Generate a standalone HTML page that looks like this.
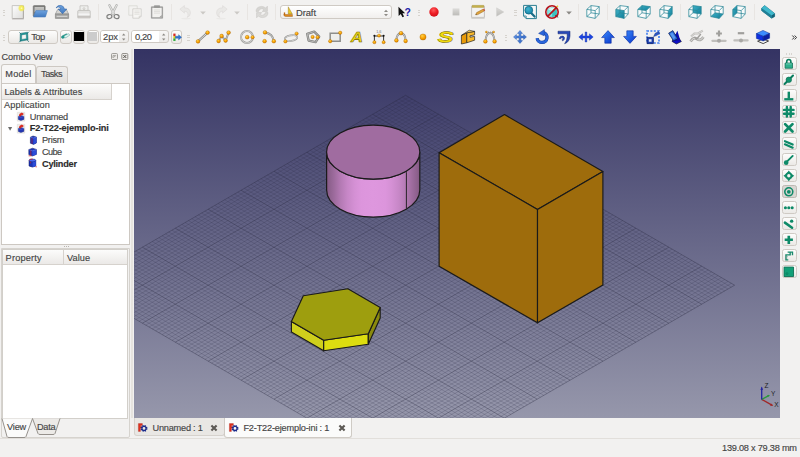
<!DOCTYPE html>
<html><head><meta charset="utf-8"><title>FreeCAD</title>
<style>
html,body{margin:0;padding:0}
body{width:800px;height:457px;overflow:hidden;background:#f2f1f0;position:relative;font-family:"Liberation Sans",sans-serif;font-size:10.5px;color:#3c3c3c}
.a{position:absolute}
.t{position:absolute;white-space:nowrap;line-height:12px;height:12px;-webkit-text-stroke:.15px currentColor}
.b{font-weight:bold}
.btn{position:absolute;border:1px solid #cfcac4;border-radius:3px;background:linear-gradient(#fdfdfc,#ebe9e6);box-sizing:border-box}
.sep{position:absolute;width:1px;background:#dcd9d5;height:16px;top:5px}
.hd{position:absolute;width:1px;height:1px;background:#b9b5af}
svg{position:absolute;overflow:visible}
.ic{position:absolute;width:16px;height:16px}
#vp{position:absolute;left:134px;top:49px;width:646px;height:369px;background:linear-gradient(#343363,#9697ab);overflow:hidden}
.panel{position:absolute;background:#fff;border:1px solid #cdc8c2;box-sizing:border-box}
.hdr{position:absolute;background:linear-gradient(#fcfcfb,#ebe9e7);border-bottom:1px solid #d6d2cd;border-right:1px solid #d6d2cd;box-sizing:border-box}
</style></head><body>

<!-- ======= 3D viewport ======= -->
<div id="vp"><svg width="646" height="369" viewBox="0 0 646 369" style="left:0;top:0;overflow:hidden"><path d="M268.31 48.20L597.31 238.10M274.89 48.20L-54.11 238.10M265.02 50.10L594.02 240.00M278.18 50.10L-50.82 240.00M261.73 52.00L590.73 241.90M281.47 52.00L-47.53 241.90M258.44 53.90L587.44 243.80M284.76 53.90L-44.24 243.80M255.15 55.80L584.15 245.69M288.05 55.80L-40.95 245.69M251.86 57.69L580.86 247.59M291.34 57.69L-37.66 247.59M248.57 59.59L577.57 249.49M294.63 59.59L-34.37 249.49M245.28 61.49L574.28 251.39M297.92 61.49L-31.08 251.39M241.99 63.39L570.99 253.29M301.21 63.39L-27.79 253.29M235.41 67.19L564.41 257.09M307.79 67.19L-21.21 257.09M232.12 69.09L561.12 258.99M311.08 69.09L-17.92 258.99M228.83 70.99L557.83 260.89M314.37 70.99L-14.63 260.89M225.54 72.89L554.54 262.79M317.66 72.89L-11.34 262.79M222.25 74.78L551.25 264.68M320.95 74.78L-8.05 264.68M218.96 76.68L547.96 266.58M324.24 76.68L-4.76 266.58M215.67 78.58L544.67 268.48M327.53 78.58L-1.47 268.48M212.38 80.48L541.38 270.38M330.82 80.48L1.82 270.38M209.09 82.38L538.09 272.28M334.11 82.38L5.11 272.28M202.51 86.18L531.51 276.08M340.69 86.18L11.69 276.08M199.22 88.08L528.22 277.98M343.98 88.08L14.98 277.98M195.93 89.98L524.93 279.88M347.27 89.98L18.27 279.88M192.64 91.88L521.64 281.78M350.56 91.88L21.56 281.78M189.35 93.77L518.35 283.67M353.85 93.77L24.85 283.67M186.06 95.67L515.06 285.57M357.14 95.67L28.14 285.57M182.77 97.57L511.77 287.47M360.43 97.57L31.43 287.47M179.48 99.47L508.48 289.37M363.72 99.47L34.72 289.37M176.19 101.37L505.19 291.27M367.01 101.37L38.01 291.27M169.61 105.17L498.61 295.07M373.59 105.17L44.59 295.07M166.32 107.07L495.32 296.97M376.88 107.07L47.88 296.97M163.03 108.97L492.03 298.87M380.17 108.97L51.17 298.87M159.74 110.87L488.74 300.77M383.46 110.87L54.46 300.77M156.45 112.76L485.45 302.66M386.75 112.76L57.75 302.66M153.16 114.66L482.16 304.56M390.04 114.66L61.04 304.56M149.87 116.56L478.87 306.46M393.33 116.56L64.33 306.46M146.58 118.46L475.58 308.36M396.62 118.46L67.62 308.36M143.29 120.36L472.29 310.26M399.91 120.36L70.91 310.26M136.71 124.16L465.71 314.06M406.49 124.16L77.49 314.06M133.42 126.06L462.42 315.96M409.78 126.06L80.78 315.96M130.13 127.96L459.13 317.86M413.07 127.96L84.07 317.86M126.84 129.86L455.84 319.76M416.36 129.86L87.36 319.76M123.55 131.75L452.55 321.65M419.65 131.75L90.65 321.65M120.26 133.65L449.26 323.55M422.94 133.65L93.94 323.55M116.97 135.55L445.97 325.45M426.23 135.55L97.23 325.45M113.68 137.45L442.68 327.35M429.52 137.45L100.52 327.35M110.39 139.35L439.39 329.25M432.81 139.35L103.81 329.25M103.81 143.15L432.81 333.05M439.39 143.15L110.39 333.05M100.52 145.05L429.52 334.95M442.68 145.05L113.68 334.95M97.23 146.95L426.23 336.85M445.97 146.95L116.97 336.85M93.94 148.85L422.94 338.75M449.26 148.85L120.26 338.75M90.65 150.75L419.65 340.64M452.55 150.75L123.55 340.64M87.36 152.64L416.36 342.54M455.84 152.64L126.84 342.54M84.07 154.54L413.07 344.44M459.13 154.54L130.13 344.44M80.78 156.44L409.78 346.34M462.42 156.44L133.42 346.34M77.49 158.34L406.49 348.24M465.71 158.34L136.71 348.24M70.91 162.14L399.91 352.04M472.29 162.14L143.29 352.04M67.62 164.04L396.62 353.94M475.58 164.04L146.58 353.94M64.33 165.94L393.33 355.84M478.87 165.94L149.87 355.84M61.04 167.84L390.04 357.74M482.16 167.84L153.16 357.74M57.75 169.73L386.75 359.63M485.45 169.73L156.45 359.63M54.46 171.63L383.46 361.53M488.74 171.63L159.74 361.53M51.17 173.53L380.17 363.43M492.03 173.53L163.03 363.43M47.88 175.43L376.88 365.33M495.32 175.43L166.32 365.33M44.59 177.33L373.59 367.23M498.61 177.33L169.61 367.23M38.01 181.13L367.01 371.03M505.19 181.13L176.19 371.03M34.72 183.03L363.72 372.93M508.48 183.03L179.48 372.93M31.43 184.93L360.43 374.83M511.77 184.93L182.77 374.83M28.14 186.83L357.14 376.73M515.06 186.83L186.06 376.73M24.85 188.72L353.85 378.62M518.35 188.72L189.35 378.62M21.56 190.62L350.56 380.52M521.64 190.62L192.64 380.52M18.27 192.52L347.27 382.42M524.93 192.52L195.93 382.42M14.98 194.42L343.98 384.32M528.22 194.42L199.22 384.32M11.69 196.32L340.69 386.22M531.51 196.32L202.51 386.22M5.11 200.12L334.11 390.02M538.09 200.12L209.09 390.02M1.82 202.02L330.82 391.92M541.38 202.02L212.38 391.92M-1.47 203.92L327.53 393.82M544.67 203.92L215.67 393.82M-4.76 205.82L324.24 395.72M547.96 205.82L218.96 395.72M-8.05 207.71L320.95 397.61M551.25 207.71L222.25 397.61M-11.34 209.61L317.66 399.51M554.54 209.61L225.54 399.51M-14.63 211.51L314.37 401.41M557.83 211.51L228.83 401.41M-17.92 213.41L311.08 403.31M561.12 213.41L232.12 403.31M-21.21 215.31L307.79 405.21M564.41 215.31L235.41 405.21M-27.79 219.11L301.21 409.01M570.99 219.11L241.99 409.01M-31.08 221.01L297.92 410.91M574.28 221.01L245.28 410.91M-34.37 222.91L294.63 412.81M577.57 222.91L248.57 412.81M-37.66 224.81L291.34 414.71M580.86 224.81L251.86 414.71M-40.95 226.70L288.05 416.60M584.15 226.70L255.15 416.60M-44.24 228.60L284.76 418.50M587.44 228.60L258.44 418.50M-47.53 230.50L281.47 420.40M590.73 230.50L261.73 420.40M-50.82 232.40L278.18 422.30M594.02 232.40L265.02 422.30M-54.11 234.30L274.89 424.20M597.31 234.30L268.31 424.20" stroke="#2a2a46" stroke-opacity=".32" stroke-width=".6" fill="none"/><path d="M271.60 46.30L600.60 236.20M271.60 46.30L-57.40 236.20M238.70 65.29L567.70 255.19M304.50 65.29L-24.50 255.19M205.80 84.28L534.80 274.18M337.40 84.28L8.40 274.18M172.90 103.27L501.90 293.17M370.30 103.27L41.30 293.17M140.00 122.26L469.00 312.16M403.20 122.26L74.20 312.16M107.10 141.25L436.10 331.15M436.10 141.25L107.10 331.15M74.20 160.24L403.20 350.14M469.00 160.24L140.00 350.14M41.30 179.23L370.30 369.13M501.90 179.23L172.90 369.13M8.40 198.22L337.40 388.12M534.80 198.22L205.80 388.12M-24.50 217.21L304.50 407.11M567.70 217.21L238.70 407.11M-57.40 236.20L271.60 426.10M600.60 236.20L271.60 426.10" stroke="#26263e" stroke-opacity=".45" stroke-width=".8" fill="none"/><defs><linearGradient id="cylg" x1="0" x2="1" y1="0" y2="0"><stop offset="0.0000" stop-color="rgb(122,83,122)"/><stop offset="0.0175" stop-color="rgb(138,94,138)"/><stop offset="0.0750" stop-color="rgb(155,106,155)"/><stop offset="0.1500" stop-color="rgb(180,122,180)"/><stop offset="0.2250" stop-color="rgb(199,135,199)"/><stop offset="0.3000" stop-color="rgb(212,144,212)"/><stop offset="0.3700" stop-color="rgb(220,149,220)"/><stop offset="0.5000" stop-color="rgb(222,151,222)"/><stop offset="0.6300" stop-color="rgb(220,149,220)"/><stop offset="0.7000" stop-color="rgb(212,144,212)"/><stop offset="0.7750" stop-color="rgb(199,135,199)"/><stop offset="0.8500" stop-color="rgb(180,122,180)"/><stop offset="0.9250" stop-color="rgb(155,106,155)"/><stop offset="0.9825" stop-color="rgb(138,94,138)"/><stop offset="1.0000" stop-color="rgb(122,83,122)"/></linearGradient></defs><path d="M192.6 103.1A46.6 27.0 0 0 0 285.8 103.1L285.8 141.1A46.6 27.0 0 0 1 192.6 141.1Z" fill="url(#cylg)" stroke="#1a1a1a" stroke-width="1.15"/><ellipse cx="239.2" cy="103.1" rx="46.6" ry="27.0" fill="#a06ca0" stroke="#1a1a1a" stroke-width="1.15"/><path d="M272.4 123.2V159.6" stroke="#1a1a1a" stroke-width=".9"/><polygon points="370.5,65.6 468.9,122.5 403.5,160.4 305.1,103.8" fill="#9e6c0c" stroke="#1a1a1a" stroke-width="1.15" stroke-linejoin="round"/><polygon points="305.1,103.8 403.5,160.4 403.5,273.8 305.1,217.2" fill="#9e6c0c" stroke="#1a1a1a" stroke-width="1.15" stroke-linejoin="round"/><polygon points="403.5,160.4 468.9,122.5 468.9,235.9 403.5,273.8" fill="#9e6c0c" stroke="#1a1a1a" stroke-width="1.15" stroke-linejoin="round"/><polygon points="157.4,272.5 189.7,291.3 189.7,301.8 157.4,283.0" fill="#cfcf1c" stroke="#1a1a1a" stroke-width="1.15" stroke-linejoin="round"/><polygon points="189.7,291.3 234.3,284.7 234.3,295.2 189.7,301.8" fill="#dddd10" stroke="#1a1a1a" stroke-width="1.15" stroke-linejoin="round"/><polygon points="234.3,284.7 246.2,258.6 246.2,269.1 234.3,295.2" fill="#8a8a0e" stroke="#1a1a1a" stroke-width="1.15" stroke-linejoin="round"/><polygon points="169.3,246.7 213.9,239.7 246.2,258.6 234.3,284.7 189.7,291.3 157.4,272.5" fill="#9e9e0e" stroke="#1a1a1a" stroke-width="1.15" stroke-linejoin="round"/><g stroke-width="1.3" fill="none"><path d="M627.7 350.4L638.4 356.4" stroke="#a02828"/><path d="M627.7 350.4L635.2 346.4" stroke="#2a9a3a"/><path d="M627.7 350.4L627.7 338.4" stroke="#2222a0"/></g><path d="M627.7 337.6l-1.2 3.4h2.4Z" fill="#2222a0"/><path d="M639.2 356.9l-3.3 -.4l1.2 -2.1Z" fill="#a02828"/><path d="M635.9 346.0l-2.9 .2l1 1.9Z" fill="#2a9a3a"/><g font-family="Liberation Sans,sans-serif" font-size="6.5" fill="#222"><text x="630.6" y="339.3">Z</text><text x="637.0" y="346.6">Y</text><text x="640.2" y="358.4">X</text></g></svg></div>

<!-- ======= toolbar row 1 ======= -->
<svg width="0" height="0" style="position:absolute"><defs><radialGradient id="og" cx=".38" cy=".32" r=".75"><stop offset="0" stop-color="#ffd24a"/><stop offset=".55" stop-color="#f8a000"/><stop offset="1" stop-color="#d27c00"/></radialGradient><linearGradient id="pg" x1="0" y1="0" x2="1" y2="1"><stop offset="0" stop-color="#fdfdfd"/><stop offset="1" stop-color="#dedddb"/></linearGradient><radialGradient id="yg"><stop offset="0" stop-color="#fffbd0"/><stop offset=".45" stop-color="#f6ee50"/><stop offset="1" stop-color="#f0e648" stop-opacity=".55"/></radialGradient><linearGradient id="fg" x1="0" y1="0" x2="0" y2="1"><stop offset="0" stop-color="#6ea2de"/><stop offset="1" stop-color="#3f78c0"/></linearGradient><radialGradient id="rg" cx=".45" cy=".3" r=".8"><stop offset="0" stop-color="#ff5a5a"/><stop offset=".5" stop-color="#ec1c24"/><stop offset="1" stop-color="#c90f18"/></radialGradient><linearGradient id="sg" x1="0" y1="0" x2="0" y2="1"><stop offset="0" stop-color="#dddcda"/><stop offset=".5" stop-color="#cccbc8"/><stop offset="1" stop-color="#bdbcb9"/></linearGradient><radialGradient id="zg" cx=".4" cy=".35" r=".8"><stop offset="0" stop-color="#3fb6d2"/><stop offset="1" stop-color="#107a9c"/></radialGradient><linearGradient id="tg" x1="0" y1="0" x2="1" y2="1"><stop offset="0" stop-color="#3fb0c6"/><stop offset="1" stop-color="#0f7f9a"/></linearGradient><linearGradient id="bg2" x1="0" y1="0" x2="1" y2="1"><stop offset="0" stop-color="#6aa0f0"/><stop offset="1" stop-color="#2a5fc0"/></linearGradient><linearGradient id="bg3" x1="0" y1="0" x2="1" y2="1"><stop offset="0" stop-color="#3a8cff"/><stop offset="1" stop-color="#0a34c8"/></linearGradient><linearGradient id="sn" x1="0" y1="0" x2="0" y2="1"><stop offset="0" stop-color="#1aa07a"/><stop offset="1" stop-color="#0a7a5a"/></linearGradient></defs></svg>
<div class="a" style="left:2.6px;top:9.8px;width:2.5px;height:1px;background:#d6d3ce"></div><div class="a" style="left:2.6px;top:12.3px;width:2.5px;height:1px;background:#d6d3ce"></div><div class="a" style="left:2.6px;top:14.8px;width:2.5px;height:1px;background:#d6d3ce"></div>
<svg class="ic" style="left:396.55px;top:5.05px;width:14.50px;height:14.50px" viewBox="0 0 16 16"><path d="M1.6 2L1.8 12.2L4.2 9.8L6 13.6L7.8 12.8L6 9.2L9 9Z" fill="#111"/><text x="8.4" y="11.6" font-family="Liberation Sans,sans-serif" font-weight="bold" font-size="11.5" fill="#1c1ca8">?</text></svg>
<svg class="ic" style="left:10.25px;top:4.30px;width:16.00px;height:16.00px" viewBox="0 0 16 16"><path d="M2.2 1.6H13.4V14.6H2.2Z" fill="url(#pg)" stroke="#bcbab6" stroke-width=".8"/><path d="M13.4 2V14.6H2.6" fill="none" stroke="#a4a29e" stroke-width=".8"/><path d="M2 15.3H13.8" stroke="#cfccc8" stroke-width=".7"/><circle cx="11.5" cy="4.2" r="3.1" fill="url(#yg)"/></svg>
<svg class="ic" style="left:32.00px;top:4.30px;width:16.00px;height:16.00px" viewBox="0 0 16 16"><path d="M1.2 2.6Q1.2 1.6 2.2 1.6H12.2Q13.2 1.6 13.2 2.6V12H1.2Z" fill="#7c7c7a" stroke="#666664" stroke-width=".5"/><path d="M2.6 3H12V8H2.6Z" fill="#c9c9c7"/><path d="M2.6 4.2H12M2.6 5.6H12" stroke="#a8a8a6" stroke-width=".5"/><path d="M3.8 6.6H15.4L13.4 13H1.4Z" fill="url(#fg)" stroke="#4a7ebc" stroke-width=".6" stroke-linejoin="round"/></svg>
<svg class="ic" style="left:54.25px;top:4.30px;width:16.00px;height:16.00px" viewBox="0 0 16 16"><path d="M1.4 10L3.6 5.6H12.4L14.6 10Z" fill="#d4d4d2" stroke="#9a9a98" stroke-width=".7" stroke-linejoin="round"/><path d="M1.4 10H14.6V14.4H1.4Z" fill="#a2a2a0" stroke="#878785" stroke-width=".7"/><path d="M2.6 12.3H13.4" stroke="#dcdcda" stroke-width="1"/><path d="M2 4Q3.4 .8 7 1.4Q10 2 10.4 5H12.8L8.6 9.8L4.2 5H6.8Q6.4 3 4.6 3Q3 3 2 4Z" fill="url(#fg)" stroke="#2f62a3" stroke-width=".55" stroke-linejoin="round"/></svg>
<svg class="ic" style="left:76.00px;top:4.30px;width:16.00px;height:16.00px" viewBox="0 0 16 16"><path d="M4 1.8H12V7H4Z" fill="#efefed" stroke="#c2c0bc" stroke-width=".8"/><path d="M8 3V5.6M6.8 4.4L8 5.8L9.2 4.4" stroke="#c9c7c3" stroke-width=".9" fill="none"/><path d="M1.8 7.2Q1.8 6.4 2.6 6.4H13.4Q14.2 6.4 14.2 7.2V12.8H1.8Z" fill="#e3e2e0" stroke="#bdbbb7" stroke-width=".8"/><path d="M2.4 10.2H13.6" stroke="#f7f7f6" stroke-width="1.4"/><path d="M1.8 12.6H14.2V14H1.8Z" fill="#d2d0cd" stroke="#bdbbb7" stroke-width=".6"/></svg>
<svg class="ic" style="left:105.25px;top:4.30px;width:16.00px;height:16.00px" viewBox="0 0 16 16"><path d="M4.4 1.2L9.2 10.4M11.6 1.2L6.8 10.4" stroke="#adadab" stroke-width="2.3" stroke-linecap="round"/><path d="M4.4 1.2L9.2 10.4M11.6 1.2L6.8 10.4" stroke="#e2e2e0" stroke-width="1.1" stroke-linecap="round" fill="none"/><ellipse cx="4.4" cy="12.6" rx="2.5" ry="2" transform="rotate(-15 4.4 12.6)" fill="none" stroke="#828280" stroke-width="1.2"/><ellipse cx="11.6" cy="12.6" rx="2.5" ry="2" transform="rotate(15 11.6 12.6)" fill="none" stroke="#828280" stroke-width="1.2"/></svg>
<svg class="ic" style="left:126.75px;top:4.30px;width:16.00px;height:16.00px" viewBox="0 0 16 16"><path d="M1.8 1.8H10.2V11.2H1.8Z" fill="#f3f2f0" stroke="#d6d4d0" stroke-width=".7" stroke-linejoin="miter"/><path d="M5.8 4.8H14.2V12.2L12.2 14.2H5.8Z" fill="#f6f5f3" stroke="#c9c7c3" stroke-width=".7"/><path d="M12.2 14.2V12.2H14.2" fill="none" stroke="#c9c7c3" stroke-width=".6"/><path d="M7.4 7H12.6M7.4 8.6H12.6M7.4 10.2H12.6" stroke="#dcdad6" stroke-width=".8"/></svg>
<svg class="ic" style="left:149.00px;top:4.30px;width:16.00px;height:16.00px" viewBox="0 0 16 16"><path d="M2.4 2.8H13.6V14.2H2.4Z" fill="#a0a09e" stroke="#8a8a88" stroke-width=".6"/><path d="M3.3 3.8H12.7V13.3H3.3Z" fill="#f2f1ef"/><path d="M5.4 1.6H10.6V3.4H5.4Z" fill="#9a9a98" stroke="#858583" stroke-width=".4"/><path d="M5 6H11M5 7.6H11M5 9.2H11" stroke="#d9d7d3" stroke-width=".7"/><path d="M10.4 13.3L12.7 11V13.3Z" fill="#9a9a98"/></svg>
<svg class="ic" style="left:178.25px;top:4.30px;width:16.00px;height:16.00px" viewBox="0 0 16 16"><path d="M1.8 5.2L6.4 1.6V3.9Q12.4 3.8 12.4 9Q12.4 12.4 9.2 13.4Q10.5 11.6 9.9 9.6Q9.1 7.1 6.4 7.1V9.1Z" fill="#e9e8e6" stroke="#dbd9d6" stroke-width=".6" stroke-linejoin="round"/><ellipse cx="8" cy="14.6" rx="5" ry=".8" fill="#eae9e7"/></svg>
<svg class="ic" style="left:212.75px;top:4.30px;width:16.00px;height:16.00px" viewBox="0 0 16 16"><path d="M14.2 5.2L9.6 1.6V3.9Q3.6 3.8 3.6 9Q3.6 12.4 6.8 13.4Q5.5 11.6 6.1 9.6Q6.9 7.1 9.6 7.1V9.1Z" fill="#e9e8e6" stroke="#dbd9d6" stroke-width=".6" stroke-linejoin="round"/><ellipse cx="8" cy="14.6" rx="5" ry=".8" fill="#eae9e7"/></svg>
<svg class="ic" style="left:253.75px;top:4.30px;width:16.00px;height:16.00px" viewBox="0 0 16 16"><path d="M2 7.4Q2.2 2.6 7.6 2.4Q10 2.4 11.6 4L13.4 2.2V7.4H8.2L10 5.6Q8.8 4.6 7.4 4.8Q5 5 4.6 7.4Z" fill="#d6d5d2" stroke="#c4c2be" stroke-width=".5"/><path d="M14 8.6Q13.8 13.4 8.4 13.6Q6 13.6 4.4 12L2.6 13.8V8.6H7.8L6 10.4Q7.2 11.4 8.6 11.2Q11 11 11.4 8.6Z" fill="#dcdbd8" stroke="#c4c2be" stroke-width=".5"/></svg>
<svg class="ic" style="left:425.75px;top:4.30px;width:16.00px;height:16.00px" viewBox="0 0 16 16"><circle cx="8" cy="8" r="4.7" fill="url(#rg)"/></svg>
<svg class="ic" style="left:447.75px;top:4.30px;width:16.00px;height:16.00px" viewBox="0 0 16 16"><path d="M4.6 4.4H11.4V11.4H4.6Z" fill="url(#sg)"/></svg>
<svg class="ic" style="left:469.90px;top:4.30px;width:16.00px;height:16.00px" viewBox="0 0 16 16"><path d="M1.6 2.4H14.4V13.4H1.6Z" fill="#f3f2f0" stroke="#b7b5b1" stroke-width=".8"/><path d="M2.2 1.4H13.8V3.4H2.2Z" fill="#c7b24a" stroke="#a8943a" stroke-width=".5"/><path d="M1.4 13.4H14.6V14.8H1.4Z" fill="#cfcdc9"/><path d="M5.6 10.8L6.6 8.6L13 5.2L14.2 7L7.8 10.6Z" fill="#e0a23a" stroke="#9a6a1e" stroke-width=".5" stroke-linejoin="round"/><path d="M13 5.2L14 4.6L15.2 6.4L14.2 7Z" fill="#d0453a"/><path d="M5.6 10.8L6.1 9.7L6.8 10.6Z" fill="#333"/></svg>
<svg class="ic" style="left:492.00px;top:4.30px;width:16.00px;height:16.00px" viewBox="0 0 16 16"><path d="M4.6 3.8L11.8 8L4.6 12.2Z" fill="url(#sg)" stroke="#c6c5c2" stroke-width=".4" stroke-linejoin="round"/></svg>
<svg class="ic" style="left:521.75px;top:4.30px;width:16.00px;height:16.00px" viewBox="0 0 16 16"><path d="M1.6 1.4H14.4V14.6H4.2L1.6 12Z" fill="#f6f8f8" stroke="#2b7f92" stroke-width="1"/><path d="M1.6 12H4.2V14.6" fill="none" stroke="#2b7f92" stroke-width=".8"/><path d="M9.4 9.2L12.6 12.6" stroke="#1a6c86" stroke-width="2.2" stroke-linecap="round"/><circle cx="6.8" cy="6.2" r="3.9" fill="url(#zg)" stroke="#156a86" stroke-width=".8"/></svg>
<svg class="ic" style="left:544.10px;top:4.30px;width:16.00px;height:16.00px" viewBox="0 0 16 16"><path d="M3.6 5L8.6 3.4L12.8 5.2V11L8.2 13.2L3.6 11Z" fill="#7fe4e2" stroke="#3aa8aa" stroke-width=".5"/><path d="M3.6 5L8.2 7L12.8 5.2L8.6 3.4Z" fill="#d8f8f6"/><path d="M8.2 7L12.8 5.2V11L8.2 13.2Z" fill="#3cc0c0"/><path d="M10.6 12.6L14.6 13.6L12 10.8Z" fill="#222"/><path d="M9 6.6L14 1.8" stroke="#e8c820" stroke-width="1.2"/><circle cx="8" cy="8" r="6.2" fill="none" stroke="#b5121b" stroke-width="1.6"/><path d="M3.6 12.4L12.4 3.6" stroke="#b5121b" stroke-width="1.6"/></svg>
<svg class="ic" style="left:585.00px;top:4.30px;width:16.00px;height:16.00px" viewBox="0 0 16 16"><polygon points="1.8,5.4 6.0,1.6 14.2,2.6 14.2,10.0 10.2,14.4 1.8,12.6" fill="#fafcfc" fill-opacity=".9"/><g fill="none" stroke="#2b8797" stroke-width=".75" stroke-linejoin="round"><polygon points="1.8,5.4 10.2,6.6 10.2,14.4 1.8,12.6"/><polygon points="6.0,1.6 14.2,2.6 14.2,10.0 6.0,8.8"/><path d="M1.8 5.4L6.0 1.6M10.2 6.6L14.2 2.6M10.2 14.4L14.2 10.0M1.8 12.6L6.0 8.8"/></g></svg>
<svg class="ic" style="left:613.90px;top:4.30px;width:16.00px;height:16.00px" viewBox="0 0 16 16"><polygon points="1.8,5.4 6.0,1.6 14.2,2.6 14.2,10.0 10.2,14.4 1.8,12.6" fill="#fafcfc" fill-opacity=".9"/><polygon points="1.8,5.4 10.2,6.6 10.2,14.4 1.8,12.6" fill="url(#tg)"/><g fill="none" stroke="#2b8797" stroke-width=".75" stroke-linejoin="round"><polygon points="1.8,5.4 10.2,6.6 10.2,14.4 1.8,12.6"/><polygon points="6.0,1.6 14.2,2.6 14.2,10.0 6.0,8.8"/><path d="M1.8 5.4L6.0 1.6M10.2 6.6L14.2 2.6M10.2 14.4L14.2 10.0M1.8 12.6L6.0 8.8"/></g></svg>
<svg class="ic" style="left:635.75px;top:4.30px;width:16.00px;height:16.00px" viewBox="0 0 16 16"><polygon points="1.8,5.4 6.0,1.6 14.2,2.6 14.2,10.0 10.2,14.4 1.8,12.6" fill="#fafcfc" fill-opacity=".9"/><polygon points="1.8,5.4 10.2,6.6 14.2,2.6 6.0,1.6" fill="url(#tg)"/><g fill="none" stroke="#2b8797" stroke-width=".75" stroke-linejoin="round"><polygon points="1.8,5.4 10.2,6.6 10.2,14.4 1.8,12.6"/><polygon points="6.0,1.6 14.2,2.6 14.2,10.0 6.0,8.8"/><path d="M1.8 5.4L6.0 1.6M10.2 6.6L14.2 2.6M10.2 14.4L14.2 10.0M1.8 12.6L6.0 8.8"/></g></svg>
<svg class="ic" style="left:658.00px;top:4.30px;width:16.00px;height:16.00px" viewBox="0 0 16 16"><polygon points="1.8,5.4 6.0,1.6 14.2,2.6 14.2,10.0 10.2,14.4 1.8,12.6" fill="#fafcfc" fill-opacity=".9"/><polygon points="10.2,6.6 14.2,2.6 14.2,10.0 10.2,14.4" fill="url(#tg)"/><g fill="none" stroke="#2b8797" stroke-width=".75" stroke-linejoin="round"><polygon points="1.8,5.4 10.2,6.6 10.2,14.4 1.8,12.6"/><polygon points="6.0,1.6 14.2,2.6 14.2,10.0 6.0,8.8"/><path d="M1.8 5.4L6.0 1.6M10.2 6.6L14.2 2.6M10.2 14.4L14.2 10.0M1.8 12.6L6.0 8.8"/></g></svg>
<svg class="ic" style="left:686.70px;top:4.30px;width:16.00px;height:16.00px" viewBox="0 0 16 16"><polygon points="1.8,5.4 6.0,1.6 14.2,2.6 14.2,10.0 10.2,14.4 1.8,12.6" fill="#fafcfc" fill-opacity=".9"/><polygon points="6.0,1.6 14.2,2.6 14.2,10.0 6.0,8.8" fill="url(#tg)"/><g fill="none" stroke="#2b8797" stroke-width=".75" stroke-linejoin="round"><polygon points="1.8,5.4 10.2,6.6 10.2,14.4 1.8,12.6"/><polygon points="6.0,1.6 14.2,2.6 14.2,10.0 6.0,8.8"/><path d="M1.8 5.4L6.0 1.6M10.2 6.6L14.2 2.6M10.2 14.4L14.2 10.0M1.8 12.6L6.0 8.8"/></g></svg>
<svg class="ic" style="left:708.90px;top:4.30px;width:16.00px;height:16.00px" viewBox="0 0 16 16"><polygon points="1.8,5.4 6.0,1.6 14.2,2.6 14.2,10.0 10.2,14.4 1.8,12.6" fill="#fafcfc" fill-opacity=".9"/><polygon points="1.8,12.6 10.2,14.4 14.2,10.0 6.0,8.8" fill="url(#tg)"/><g fill="none" stroke="#2b8797" stroke-width=".75" stroke-linejoin="round"><polygon points="1.8,5.4 10.2,6.6 10.2,14.4 1.8,12.6"/><polygon points="6.0,1.6 14.2,2.6 14.2,10.0 6.0,8.8"/><path d="M1.8 5.4L6.0 1.6M10.2 6.6L14.2 2.6M10.2 14.4L14.2 10.0M1.8 12.6L6.0 8.8"/></g></svg>
<svg class="ic" style="left:731.10px;top:4.30px;width:16.00px;height:16.00px" viewBox="0 0 16 16"><polygon points="1.8,5.4 6.0,1.6 14.2,2.6 14.2,10.0 10.2,14.4 1.8,12.6" fill="#fafcfc" fill-opacity=".9"/><polygon points="1.8,5.4 6.0,1.6 6.0,8.8 1.8,12.6" fill="url(#tg)"/><g fill="none" stroke="#2b8797" stroke-width=".75" stroke-linejoin="round"><polygon points="1.8,5.4 10.2,6.6 10.2,14.4 1.8,12.6"/><polygon points="6.0,1.6 14.2,2.6 14.2,10.0 6.0,8.8"/><path d="M1.8 5.4L6.0 1.6M10.2 6.6L14.2 2.6M10.2 14.4L14.2 10.0M1.8 12.6L6.0 8.8"/></g></svg>
<svg class="ic" style="left:760.10px;top:4.30px;width:16.00px;height:16.00px" viewBox="0 0 16 16"><path d="M1.6 4.2L4.6 1.6L14.6 9.4V12.6L11.6 14.2L1.6 6.6Z" fill="#2b9db3" stroke="#1b6c7e" stroke-width=".6" stroke-linejoin="round"/><path d="M1.6 4.2L11.6 11.6L14.6 9.4L4.6 1.6Z" fill="#3fb8cc"/><path d="M11.6 11.6V14.2L14.6 12.6V9.4Z" fill="#156176"/><path d="M1.6 4.2V6.6L11.6 14.2V11.6Z" fill="#1f7f96"/></svg>
<div class="a" style="left:98.2px;top:4.3px;width:1px;height:16px;background:#e8e5e2"></div>
<div class="a" style="left:171.2px;top:4.3px;width:1px;height:16px;background:#e8e5e2"></div>
<div class="a" style="left:246.8px;top:4.3px;width:1px;height:16px;background:#e8e5e2"></div>
<div class="a" style="left:275.0px;top:4.3px;width:1px;height:16px;background:#e8e5e2"></div>
<div class="a" style="left:578.0px;top:4.3px;width:1px;height:16px;background:#e8e5e2"></div>
<div class="a" style="left:607.0px;top:4.3px;width:1px;height:16px;background:#e8e5e2"></div>
<div class="a" style="left:680.0px;top:4.3px;width:1px;height:16px;background:#e8e5e2"></div>
<div class="a" style="left:753.8px;top:4.3px;width:1px;height:16px;background:#e8e5e2"></div>
<svg class="a" style="left:199.5px;top:10.8px;width:6px;height:4px" viewBox="0 0 7 5"><path d="M0 .5H7L3.5 4.5Z" fill="#cbc9c5"/></svg>
<svg class="a" style="left:234.0px;top:10.8px;width:6px;height:4px" viewBox="0 0 7 5"><path d="M0 .5H7L3.5 4.5Z" fill="#cbc9c5"/></svg>
<svg class="a" style="left:566.0px;top:10.8px;width:6px;height:4px" viewBox="0 0 7 5"><path d="M0 .5H7L3.5 4.5Z" fill="#8a8884"/></svg>
<div class="a" style="left:417.8px;top:9.8px;width:2.5px;height:1px;background:#d6d3ce"></div><div class="a" style="left:417.8px;top:12.3px;width:2.5px;height:1px;background:#d6d3ce"></div><div class="a" style="left:417.8px;top:14.8px;width:2.5px;height:1px;background:#d6d3ce"></div>
<div class="a" style="left:514.3px;top:9.8px;width:2.5px;height:1px;background:#d6d3ce"></div><div class="a" style="left:514.3px;top:12.3px;width:2.5px;height:1px;background:#d6d3ce"></div><div class="a" style="left:514.3px;top:14.8px;width:2.5px;height:1px;background:#d6d3ce"></div>
<div class="btn" style="left:280px;top:5px;width:112px;height:14px;border-radius:3px;background:linear-gradient(#ffffff,#f1efed)"></div>
<svg class="ic" style="left:282.80px;top:5.80px;width:12.00px;height:12.00px" viewBox="0 0 16 16"><path d="M7 1L12.4 10.6H7Z" fill="#e8c82a" stroke="#8a6a10" stroke-width=".5"/><path d="M1 11.4H12.6V14H3.4Q1 14 1 11.4Z" fill="#e08a1a" stroke="#8a4a0a" stroke-width=".5"/><path d="M2 8.6V12" stroke="#c06a10" stroke-width="1.8"/></svg>
<svg class="a" style="left:383.6px;top:8.6px;width:4px;height:8px" viewBox="0 0 5 9"><path d="M0 3.2H5L2.5 .4ZM0 5.8H5L2.5 8.6Z" fill="#8f8c87"/></svg>

<!-- ======= toolbar row 2 ======= -->
<div class="a" style="left:2.6px;top:34.5px;width:2.5px;height:1px;background:#d6d3ce"></div><div class="a" style="left:2.6px;top:37.0px;width:2.5px;height:1px;background:#d6d3ce"></div><div class="a" style="left:2.6px;top:39.5px;width:2.5px;height:1px;background:#d6d3ce"></div>
<div class="btn" style="left:7.5px;top:29.5px;width:50.5px;height:14.5px"></div>
<svg class="ic" style="left:17.60px;top:30.80px;width:12.00px;height:12.00px" viewBox="0 0 16 16"><path d="M3 3.2L12.8 1.6L13.4 11.8L2.8 13.6Z" fill="#23999a" stroke="#15696f" stroke-width=".7"/><path d="M5 5.2L11 4.2L11.2 10.2L4.8 11.2Z" fill="#f6f5f3" stroke="#15696f" stroke-width=".5"/><path d="M1.6 15L4.4 11.8M11.6 4L14.8 .8M1.8 1.8L4.4 4.4M11.8 11.2L14.4 14.6" stroke="#15696f" stroke-width=".9"/></svg>
<div class="btn" style="left:59.7px;top:29.5px;width:12px;height:14.5px"></div>
<svg class="ic" style="left:60.45px;top:31.35px;width:10.50px;height:10.50px" viewBox="0 0 16 16"><path d="M2.2 10.2Q1.6 8.2 3.6 7.2L9 4.6Q11 3.8 11.8 5.6Q12.4 7.4 10.6 8.4L5.2 11Q3.2 11.8 2.2 10.2Z" fill="#1f9a8e" stroke="#0f6a62" stroke-width=".5"/><path d="M6.2 9.4Q5.8 7.8 7.4 7L12 4.4Q13.8 3.6 14.4 5.2Q14.8 6.8 13.4 7.6L8.8 10.2Q7 11 6.2 9.4Z" fill="#dff3ef" stroke="#2f8f84" stroke-width=".6"/></svg>
<div class="btn" style="left:73px;top:29.5px;width:12.2px;height:14.5px"></div><div class="a" style="left:74.4px;top:31.9px;width:9.6px;height:9.5px;background:#000"></div>
<div class="btn" style="left:86.8px;top:29.5px;width:12px;height:14.5px"></div><div class="a" style="left:88.1px;top:31.9px;width:9.4px;height:9.5px;background:#cccccc"></div>
<div class="btn" style="left:100.3px;top:30px;width:28.5px;height:12.8px;background:linear-gradient(#f7f6f5,#eceae8)"></div><div class="a" style="left:101.3px;top:31px;width:18.1px;height:10.8px;background:#fff;border-radius:2px 0 0 2px"></div><svg class="a" style="left:122.4px;top:32.5px;width:3.4px;height:8px" viewBox="0 0 4 9"><path d="M0 2.6H4L2 .4Z" fill="#8a8782"/><path d="M0 6.4H4L2 8.6Z" fill="#8a8782"/></svg>
<div class="btn" style="left:131.3px;top:30px;width:37.5px;height:12.8px;background:linear-gradient(#f7f6f5,#eceae8)"></div><div class="a" style="left:132.3px;top:31px;width:27.1px;height:10.8px;background:#fff;border-radius:2px 0 0 2px"></div><svg class="a" style="left:162.4px;top:32.5px;width:3.4px;height:8px" viewBox="0 0 4 9"><path d="M0 2.6H4L2 .4Z" fill="#8a8782"/><path d="M0 6.4H4L2 8.6Z" fill="#8a8782"/></svg>
<div class="btn" style="left:171.2px;top:29.5px;width:11px;height:14.5px"></div>
<svg class="ic" style="left:171.55px;top:31.55px;width:10.50px;height:10.50px" viewBox="0 0 16 16"><path d="M2 2.4H5.4V6.2H2Z" fill="#d82a20"/><path d="M2 6.2H5.4V9.8H2Z" fill="#e8d020"/><path d="M2 9.8H5.4V13.6H2Z" fill="#28a838"/><path d="M5 6.4H10V4L14.6 8L10 12V9.6H5Z" fill="#2e74d0" stroke="#1d4f9a" stroke-width=".5" stroke-linejoin="round"/></svg>
<div class="a" style="left:187.3px;top:34.5px;width:2.5px;height:1px;background:#d6d3ce"></div><div class="a" style="left:187.3px;top:37.0px;width:2.5px;height:1px;background:#d6d3ce"></div><div class="a" style="left:187.3px;top:39.5px;width:2.5px;height:1px;background:#d6d3ce"></div>
<svg class="ic" style="left:194.80px;top:28.70px;width:16.00px;height:16.00px" viewBox="0 0 16 16"><path d="M3 12.4L12.6 3.6" fill="none" stroke="#8c8c8a" stroke-width="2.2" stroke-linecap="round"/><path d="M3 12.4L12.6 3.6" fill="none" stroke="#d9d9d7" stroke-width="1.0" stroke-linecap="round"/><circle cx="3.00" cy="12.40" r="1.90" fill="url(#og)" stroke="#a86400" stroke-width=".35"/><circle cx="12.60" cy="3.60" r="1.90" fill="url(#og)" stroke="#a86400" stroke-width=".35"/></svg>
<svg class="ic" style="left:216.40px;top:28.70px;width:16.00px;height:16.00px" viewBox="0 0 16 16"><path d="M2.6 12L5.6 7L9.6 11.6L12.6 3.6" fill="none" stroke="#8c8c8a" stroke-width="1.9" stroke-linecap="round"/><path d="M2.6 12L5.6 7L9.6 11.6L12.6 3.6" fill="none" stroke="#d9d9d7" stroke-width="0.7" stroke-linecap="round"/><circle cx="2.60" cy="12.00" r="1.90" fill="url(#og)" stroke="#a86400" stroke-width=".35"/><circle cx="5.60" cy="7.00" r="1.90" fill="url(#og)" stroke="#a86400" stroke-width=".35"/><circle cx="9.60" cy="11.60" r="1.90" fill="url(#og)" stroke="#a86400" stroke-width=".35"/><circle cx="12.60" cy="3.60" r="1.90" fill="url(#og)" stroke="#a86400" stroke-width=".35"/></svg>
<svg class="ic" style="left:238.90px;top:28.70px;width:16.00px;height:16.00px" viewBox="0 0 16 16"><circle cx="8" cy="8" r="6" fill="none" stroke="#9a9a98" stroke-width="1.9"/><circle cx="8" cy="8" r="6" fill="none" stroke="#dededc" stroke-width=".8"/><circle cx="8.20" cy="8.20" r="1.90" fill="url(#og)" stroke="#a86400" stroke-width=".35"/><circle cx="13.60" cy="8.20" r="1.70" fill="url(#og)" stroke="#a86400" stroke-width=".35"/></svg>
<svg class="ic" style="left:260.75px;top:28.70px;width:16.00px;height:16.00px" viewBox="0 0 16 16"><path d="M4 3.4Q12 4.6 12.8 12.2" fill="none" stroke="#8c8c8a" stroke-width="2.0" stroke-linecap="round"/><path d="M4 3.4Q12 4.6 12.8 12.2" fill="none" stroke="#d9d9d7" stroke-width="0.8" stroke-linecap="round"/><circle cx="4.00" cy="3.40" r="1.90" fill="url(#og)" stroke="#a86400" stroke-width=".35"/><circle cx="3.60" cy="12.20" r="1.90" fill="url(#og)" stroke="#a86400" stroke-width=".35"/><circle cx="12.80" cy="12.20" r="1.90" fill="url(#og)" stroke="#a86400" stroke-width=".35"/></svg>
<svg class="ic" style="left:283.00px;top:28.70px;width:16.00px;height:16.00px" viewBox="0 0 16 16"><ellipse cx="8" cy="9.2" rx="6.2" ry="2.8" transform="rotate(-11 8 9.2)" fill="none" stroke="#9a9a98" stroke-width="1.8"/><ellipse cx="8" cy="9.2" rx="6.2" ry="2.8" transform="rotate(-11 8 9.2)" fill="none" stroke="#e2e2e0" stroke-width=".7"/><circle cx="2.40" cy="12.40" r="1.70" fill="url(#og)" stroke="#a86400" stroke-width=".35"/><circle cx="13.60" cy="4.60" r="1.70" fill="url(#og)" stroke="#a86400" stroke-width=".35"/></svg>
<svg class="ic" style="left:305.20px;top:28.70px;width:16.00px;height:16.00px" viewBox="0 0 16 16"><path d="M2.2 4.8L9.2 2.6L14.2 7.6L10.6 13.2L3.6 11.6Z" fill="none" stroke="#7e7e7c" stroke-width="2.3" stroke-linejoin="round"/><path d="M2.2 4.8L9.2 2.6L14.2 7.6L10.6 13.2L3.6 11.6Z" fill="none" stroke="#c8c8c6" stroke-width=".8" stroke-linejoin="round"/><circle cx="7.60" cy="8.00" r="1.70" fill="url(#og)" stroke="#a86400" stroke-width=".35"/><circle cx="12.60" cy="8.20" r="1.70" fill="url(#og)" stroke="#a86400" stroke-width=".35"/></svg>
<svg class="ic" style="left:327.20px;top:28.70px;width:16.00px;height:16.00px" viewBox="0 0 16 16"><path d="M3.2 4.2H13.2V12.2H3.2Z" fill="#eeeeec" stroke="#8e8e8c" stroke-width="1.5"/><circle cx="3.20" cy="12.20" r="1.70" fill="url(#og)" stroke="#a86400" stroke-width=".35"/><circle cx="13.20" cy="3.80" r="1.70" fill="url(#og)" stroke="#a86400" stroke-width=".35"/></svg>
<svg class="ic" style="left:349.40px;top:28.70px;width:16.00px;height:16.00px" viewBox="0 0 16 16"><g transform="translate(8 8) scale(1.16 1) translate(-8 -8)"><text x="2.6" y="13.2" font-family="Liberation Sans,sans-serif" font-style="italic" font-weight="bold" font-size="14.5" fill="#f2dc10" stroke="#6e6000" stroke-width=".5">A</text></g></svg>
<svg class="ic" style="left:371.20px;top:28.70px;width:16.00px;height:16.00px" viewBox="0 0 16 16"><path d="M3.4 6.6V13M12.6 6.6V13M3.4 7H12.6" stroke="#222" stroke-width=".9" fill="none"/><circle cx="3.4" cy="6.8" r="1" fill="#111"/><circle cx="12.6" cy="6.8" r="1" fill="#111"/><text x="5.2" y="4.2" font-family="Liberation Sans,sans-serif" font-size="3.8" fill="#777">1.6</text><circle cx="3.40" cy="13.20" r="1.60" fill="url(#og)" stroke="#a86400" stroke-width=".35"/><circle cx="12.60" cy="13.20" r="1.60" fill="url(#og)" stroke="#a86400" stroke-width=".35"/><circle cx="8.00" cy="6.60" r="1.60" fill="url(#og)" stroke="#a86400" stroke-width=".35"/></svg>
<svg class="ic" style="left:393.25px;top:28.70px;width:16.00px;height:16.00px" viewBox="0 0 16 16"><path d="M3.4 11.4Q3.6 4.4 8 4.2Q12.4 4.4 12.6 12" fill="none" stroke="#8c8c8a" stroke-width="2.0" stroke-linecap="round"/><path d="M3.4 11.4Q3.6 4.4 8 4.2Q12.4 4.4 12.6 12" fill="none" stroke="#d9d9d7" stroke-width="0.8" stroke-linecap="round"/><circle cx="8.00" cy="4.20" r="1.90" fill="url(#og)" stroke="#a86400" stroke-width=".35"/><circle cx="3.40" cy="11.40" r="1.90" fill="url(#og)" stroke="#a86400" stroke-width=".35"/><circle cx="12.60" cy="12.00" r="1.90" fill="url(#og)" stroke="#a86400" stroke-width=".35"/></svg>
<svg class="ic" style="left:415.25px;top:28.70px;width:16.00px;height:16.00px" viewBox="0 0 16 16"><circle cx="8.00" cy="8.00" r="3.10" fill="url(#og)" stroke="#a86400" stroke-width=".35"/></svg>
<svg class="ic" style="left:437.30px;top:28.70px;width:16.00px;height:16.00px" viewBox="0 0 16 16"><g transform="translate(8 8) scale(1.3 .84) translate(-8 -8)" font-family="Liberation Sans,sans-serif" font-style="italic" font-size="17.5"><text x="2.4" y="14.3" fill="#6e6000" stroke="#6e6000" stroke-width="1.5" stroke-linejoin="round">S</text><text x="2.4" y="14.3" fill="#f2dc10" stroke="#f2dc10" stroke-width=".6" stroke-linejoin="round">S</text></g></svg>
<svg class="ic" style="left:459.80px;top:28.70px;width:16.00px;height:16.00px" viewBox="0 0 16 16"><path d="M1.4 6.4L6.8 3.8V13.8L1.4 15Z" fill="#e89a08" stroke="#222" stroke-width=".7" stroke-linejoin="round"/><path d="M6.8 3.8L14.6 2.4V5.8L10 6.8V8.2L14.6 7.4V11.2L6.8 13.8Z" fill="#f8b82a" stroke="#222" stroke-width=".7" stroke-linejoin="round"/><path d="M1.4 6.4L9.2 1.2L14.6 2.4L6.8 3.8Z" fill="#ffd66a" stroke="#222" stroke-width=".6" stroke-linejoin="round"/></svg>
<svg class="ic" style="left:482.00px;top:28.70px;width:16.00px;height:16.00px" viewBox="0 0 16 16"><path d="M4 3.2H12" stroke="#333" stroke-width=".6" stroke-dasharray="1 1"/><path d="M3.4 12.4Q4 4 8 4Q12 4 12.6 12.4" fill="none" stroke="#8c8c8a" stroke-width="1.9" stroke-linecap="round"/><path d="M3.4 12.4Q4 4 8 4Q12 4 12.6 12.4" fill="none" stroke="#d9d9d7" stroke-width="0.7" stroke-linecap="round"/><circle cx="3.40" cy="12.40" r="1.90" fill="url(#og)" stroke="#a86400" stroke-width=".35"/><circle cx="12.60" cy="12.40" r="1.90" fill="url(#og)" stroke="#a86400" stroke-width=".35"/><circle cx="4.40" cy="3.00" r="1.00" fill="url(#og)" stroke="#a86400" stroke-width=".35"/><circle cx="11.60" cy="3.00" r="1.00" fill="url(#og)" stroke="#a86400" stroke-width=".35"/></svg>
<svg class="ic" style="left:512.10px;top:28.70px;width:16.00px;height:16.00px" viewBox="0 0 16 16"><path transform="translate(8 8) scale(.9) translate(-8 -8)" d="M8 .8L10.8 4H9V7H12V5.2L15.2 8L12 10.8V9H9V12H10.8L8 15.2L5.2 12H7V9H4V10.8L.8 8L4 5.2V7H7V4H5.2Z" fill="url(#bg2)" stroke="#2a5aa8" stroke-width=".5" stroke-linejoin="round"/></svg>
<svg class="ic" style="left:534.00px;top:28.70px;width:16.00px;height:16.00px" viewBox="0 0 16 16"><path d="M9.4 3.6A5 5 0 1 1 3.1 9.2" fill="none" stroke="#173f9a" stroke-width="3.3" stroke-linecap="butt"/><path d="M9.4 3.6A5 5 0 1 1 3.1 9.2" fill="none" stroke="#2a66dc" stroke-width="2.3" stroke-linecap="butt"/><path d="M4.6 4.4L10.4 .6L10.2 6.8Z" fill="#2a66dc" stroke="#173f9a" stroke-width=".5" stroke-linejoin="round"/></svg>
<svg class="ic" style="left:556.00px;top:28.70px;width:16.00px;height:16.00px" viewBox="0 0 16 16"><path d="M2 2.2H14V7Q13.6 13 8.6 14.8Q11.2 11.4 11.2 7.4V4.8H2Z" fill="#2747b8" stroke="#13276e" stroke-width=".5"/><path d="M3 9.4Q4 6.6 7 7Q9.4 8 8.2 10.6Q7.6 11.6 6.6 12L6 10.8Q7.2 10 6.8 9Q5.6 8 4.4 10Z" fill="#2747b8" stroke="#13276e" stroke-width=".4"/></svg>
<svg class="ic" style="left:578.20px;top:28.70px;width:16.00px;height:16.00px" viewBox="0 0 16 16"><path d="M.8 8L4.6 4.8V7H7.2V3H8.8V7H11.4V4.8L15.2 8L11.4 11.2V9H8.8V13H7.2V9H4.6V11.2Z" fill="#1c44e0" stroke="#1030a8" stroke-width=".4"/></svg>
<svg class="ic" style="left:600.10px;top:28.70px;width:16.00px;height:16.00px" viewBox="0 0 16 16"><path d="M8 1.6L14.4 8.6H11.2V14.2H4.8V8.6H1.6Z" fill="url(#bg3)" stroke="#0a2aa0" stroke-width=".6" stroke-linejoin="round"/></svg>
<svg class="ic" style="left:622.30px;top:28.70px;width:16.00px;height:16.00px" viewBox="0 0 16 16"><path d="M8 14.4L14.4 7.4H11.2V1.8H4.8V7.4H1.6Z" fill="url(#bg3)" stroke="#0a2aa0" stroke-width=".6" stroke-linejoin="round"/></svg>
<svg class="ic" style="left:644.50px;top:28.70px;width:16.00px;height:16.00px" viewBox="0 0 16 16"><path d="M2 2H14V14H2Z" fill="none" stroke="#3c7cf0" stroke-width="1.6" stroke-dasharray="2 1.4"/><path d="M2 8.4H8.4V14.6H2Z" fill="#1c3fb0" stroke="#0f2470" stroke-width=".8"/><path d="M3.8 10.2H6.6V12.8H3.8Z" fill="#dfe6f6"/><path d="M8.6 7.6L10.2 4.2L13.8 2.6L14.6 4.4L11.6 6.6Z" fill="#2a56c8" stroke="#14306e" stroke-width=".4"/></svg>
<svg class="ic" style="left:666.50px;top:28.70px;width:16.00px;height:16.00px" viewBox="0 0 16 16"><path d="M5 12.4L9 5L14.4 12.6L9.4 15Z" fill="#1010c8" stroke="#000" stroke-width=".5" stroke-linejoin="round"/><path d="M5.4 11.6L10.4 1.8L13.6 12.6Z" fill="#0c0cb0"/><path d="M1.6 4.2L5.8 1.6L10.6 9.6L6.6 12Z" fill="#2a6ad8" stroke="#0a1a50" stroke-width=".7" stroke-linejoin="round"/><path d="M3 4.8L5.4 3.4L8.6 8.8L6.4 10.2Z" fill="#5a98f0"/></svg>
<svg class="ic" style="left:688.60px;top:28.70px;width:16.00px;height:16.00px" viewBox="0 0 16 16"><path d="M2 7.6L5.4 4.4H9L13.8 1.6" fill="none" stroke="#bcbbb8" stroke-width="2"/><path d="M2 7.6L5.4 4.4H9L13.8 1.6" fill="none" stroke="#e6e5e3" stroke-width=".7"/><path d="M1.6 12.4Q4.6 7.6 8 10Q11.4 12.6 14.4 8" fill="none" stroke="#a9a8a5" stroke-width="2.8"/><path d="M1.6 12.4Q4.6 7.6 8 10Q11.4 12.6 14.4 8" fill="none" stroke="#dddcda" stroke-width="1"/><path d="M5.4 8L7.6 10.2L11.8 5" fill="none" stroke="#a09f9c" stroke-width="1.5"/></svg>
<svg class="ic" style="left:710.75px;top:28.70px;width:16.00px;height:16.00px" viewBox="0 0 16 16"><path d="M8 1.6V7.4M5.1 4.5H10.9" stroke="#a09f9c" stroke-width="2.2"/><path d="M1.4 11.8H14.6" stroke="#c0bfbc" stroke-width="2.2" stroke-linecap="round"/><circle cx="8" cy="11.8" r="2" fill="#a8a7a4"/></svg>
<svg class="ic" style="left:732.75px;top:28.70px;width:16.00px;height:16.00px" viewBox="0 0 16 16"><path d="M4.8 4.2H11.2" stroke="#a09f9c" stroke-width="2.2"/><path d="M1.4 11.4H14.6" stroke="#c0bfbc" stroke-width="2.2" stroke-linecap="round"/><circle cx="8" cy="11.4" r="2" fill="#a8a7a4"/></svg>
<svg class="ic" style="left:755.00px;top:28.70px;width:16.00px;height:16.00px" viewBox="0 0 16 16"><path d="M2.6 12.2L8 10L13.6 12L8.2 14.6Z" fill="#f4f4f2" stroke="#333" stroke-width=".9" stroke-linejoin="round"/><path d="M1.4 4.6L8 1.4L14.6 4.4L8.2 7.4Z" fill="#3c8cff" stroke="#0a2a90" stroke-width=".5" stroke-linejoin="round"/><path d="M1.4 4.6L8.2 7.4V12L1.4 9.4Z" fill="#1030e0" stroke="#0a2a90" stroke-width=".5" stroke-linejoin="round"/><path d="M8.2 7.4L14.6 4.4V9.2L8.2 12Z" fill="#0c1fa0" stroke="#0a2a90" stroke-width=".5" stroke-linejoin="round"/></svg>
<div class="a" style="left:504.8px;top:34.5px;width:2.5px;height:1px;background:#d6d3ce"></div><div class="a" style="left:504.8px;top:37.0px;width:2.5px;height:1px;background:#d6d3ce"></div><div class="a" style="left:504.8px;top:39.5px;width:2.5px;height:1px;background:#d6d3ce"></div>
<svg class="a" style="left:792px;top:34.6px;width:5px;height:5px" viewBox="0 0 6 6"><path d="M.4 .6L2.6 3L.4 5.4M3.2 .6L5.4 3L3.2 5.4" fill="none" stroke="#222" stroke-width="1.1"/></svg>

<!-- ======= combo view ======= -->
<svg class="a" style="left:111px;top:53px;width:7px;height:7px" viewBox="0 0 7 7"><rect x=".5" y=".5" width="6" height="6" rx="1" fill="#eceae7" stroke="#8d8a85" stroke-width=".8"/><path d="M2 5V2.6H4.6M2.6 4.6L4.8 2.4" fill="none" stroke="#8d8a85" stroke-width=".7"/></svg><svg class="a" style="left:121.3px;top:53.2px;width:7.6px;height:7px" viewBox="0 0 7 7"><rect x=".5" y=".5" width="6" height="6" rx="1" fill="#eceae7" stroke="#7d7a75" stroke-width=".8"/><path d="M2 2L5 5M5 2L2 5" stroke="#55524e" stroke-width="1"/></svg>
<!-- tabs -->
<div class="a" style="left:1px;top:64px;width:35px;height:20px;border:1px solid #cdc8c2;border-bottom:none;border-radius:3px 3px 0 0;background:#f7f6f5;box-sizing:border-box"></div>
<div class="a" style="left:36px;top:66px;width:31.5px;height:17px;border:1px solid #cdc8c2;border-bottom:none;border-radius:3px 3px 0 0;background:linear-gradient(#f0eeec,#e3e0dc);box-sizing:border-box"></div>
<!-- tree -->
<div class="panel" style="left:1px;top:83px;width:129px;height:161.6px"></div>
<div class="hdr" style="left:2px;top:84px;width:110px;height:16px"></div>
<svg class="a" style="left:17.0px;top:111.9px;width:8px;height:9.4px" viewBox="0 0 8 9.4"><path d="M.3 .3H7.7V9.1H.3Z" fill="#f0efed" stroke="#d6d3ce" stroke-width=".5"/><path d="M1.3 4.4L4.4 3.4L6.9 4.4V7.4L3.9 8.6L1.3 7.4Z" fill="#2438b4" stroke="#16247a" stroke-width=".4"/><path d="M1.3 4.4L3.9 5.4L6.9 4.4" fill="none" stroke="#6a80e8" stroke-width=".4"/><path d="M2 4.1Q2 1.1 4.6 1.1L4.4 .3L7 2L4.9 3.6L4.8 2.7Q3.9 2.9 4.1 4.5Z" fill="#d8281e"/></svg><svg class="a" style="left:17.0px;top:123.6px;width:8px;height:9.4px" viewBox="0 0 8 9.4"><path d="M.3 .3H7.7V9.1H.3Z" fill="#f0efed" stroke="#d6d3ce" stroke-width=".5"/><path d="M1.3 4.4L4.4 3.4L6.9 4.4V7.4L3.9 8.6L1.3 7.4Z" fill="#2438b4" stroke="#16247a" stroke-width=".4"/><path d="M1.3 4.4L3.9 5.4L6.9 4.4" fill="none" stroke="#6a80e8" stroke-width=".4"/><path d="M2 4.1Q2 1.1 4.6 1.1L4.4 .3L7 2L4.9 3.6L4.8 2.7Q3.9 2.9 4.1 4.5Z" fill="#d8281e"/></svg><svg class="a" style="left:28.7px;top:135.4px;width:9px;height:10px" viewBox="0 0 9 10"><path d="M1.4 2.2L4 1L7.4 2V8L4.6 9.4L1.4 8.2Z" fill="#1c34b4" stroke="#0c1660" stroke-width=".5"/><path d="M4.4 3V9.2L7.4 8V2Z" fill="#2c4cd8"/><path d="M1.4 2.2L4.4 3L7.4 2" fill="none" stroke="#7a90f0" stroke-width=".5"/><path d="M3 3V8.6" stroke="#d02020" stroke-width=".6"/></svg><svg class="a" style="left:28.1px;top:147.0px;width:9px;height:10px" viewBox="0 0 9 10"><path d="M.8 2.6L4.6 1.2L8.4 2.4V7.4L4.4 9L.8 7.6Z" fill="#1c34b4" stroke="#0c1660" stroke-width=".5"/><path d="M4.4 3.8V9L8.4 7.4V2.4Z" fill="#2c4cd8"/><path d="M.8 2.6L4.4 3.8L8.4 2.4" fill="none" stroke="#7a90f0" stroke-width=".5"/><path d="M2.8 3.4V8.2M.6 8.8H3.6" fill="none" stroke="#d02020" stroke-width=".7"/></svg><svg class="a" style="left:28.3px;top:158.4px;width:9px;height:10px" viewBox="0 0 9 10"><path d="M1 2.4V8Q4.4 10.2 7.8 8V2.4Z" fill="#1c34b4" stroke="#0c1660" stroke-width=".5"/><path d="M4.6 3.6V9.3Q6.6 9.1 7.8 8V2.4Z" fill="#2c4cd8"/><ellipse cx="4.4" cy="2.4" rx="3.4" ry="1.4" fill="#4a6af0" stroke="#0c1660" stroke-width=".4"/><path d="M1.2 2.2Q2.4 .9 4.6 1" fill="none" stroke="#d02020" stroke-width=".8"/><path d="M2.6 3.6V5.4" stroke="#d02020" stroke-width=".6"/><path d="M7.6 8.8H8.8" stroke="#d02020" stroke-width=".8"/></svg><svg class="a" style="left:7.6px;top:126.8px;width:4.2px;height:3.8px" viewBox="0 0 5 4.4"><path d="M0 0H5L2.5 4.4Z" fill="#6e6e6c"/></svg>
<!-- splitter -->
<div class="hd" style="left:64px;top:246px"></div><div class="hd" style="left:66px;top:246px"></div><div class="hd" style="left:68px;top:246px"></div>
<!-- property -->
<div class="a" style="left:1px;top:248.4px;width:129px;height:189.4px;border:1px solid #d6d3ce;box-sizing:border-box;border-radius:0 0 2px 2px"></div>
<div class="panel" style="left:2px;top:249.2px;width:126.4px;height:169.4px;border-color:#d2cfca"></div>
<div class="hdr" style="left:3px;top:250.2px;width:61px;height:15px"></div>
<div class="hdr" style="left:64px;top:250.2px;width:63.4px;height:15px;border-right:none"></div>
<!-- view/data tabs -->
<svg width="131" height="22" style="left:0;top:417px" viewBox="0 0 131 22"><path d="M2 1.5L7 19.5Q7.5 20.5 9 20.5H24Q25.5 20.5 26 19.5L32.5 1.5" fill="#fbfbfa" stroke="#8a8680" stroke-width=".9"/><path d="M32.5 1.5L38 16.5Q38.5 17.5 40 17.5H53Q54.5 17.5 55 16.5L60 1.5" fill="#eceae7" stroke="#8a8680" stroke-width=".9"/></svg>

<!-- dock separator -->
<div class="a" style="left:131px;top:49px;width:2px;height:369px;background:#e6e3df"></div>

<!-- ======= MDI tabs ======= -->
<div class="a" style="left:134px;top:418px;width:91px;height:18px;background:#e9e7e4;border:1px solid #d6d2cd;border-top:none;border-radius:0 0 3px 3px;box-sizing:border-box"></div>
<div class="a" style="left:224px;top:418px;width:128px;height:20px;background:#fbfbfa;border:1px solid #cfcbc5;border-top:none;border-radius:0 0 3px 3px;box-sizing:border-box"></div>
<svg class="a" style="left:138.2px;top:423.0px;width:9.5px;height:9px" viewBox="0 0 9.5 9"><path d="M.4 .6H4.4V2.4H2.4V3.6H3.8V5.2H2.4V8.4H.4Z" fill="#e0301e" stroke="#9a1a10" stroke-width=".3"/><circle cx="6" cy="5.4" r="2.7" fill="none" stroke="#1a2a8a" stroke-width="1.5" stroke-dasharray="1.3 .85"/><circle cx="6" cy="5.4" r="2" fill="none" stroke="#1a2a8a" stroke-width="1.1"/></svg><svg class="a" style="left:228.8px;top:423.0px;width:9.5px;height:9px" viewBox="0 0 9.5 9"><path d="M.4 .6H4.4V2.4H2.4V3.6H3.8V5.2H2.4V8.4H.4Z" fill="#e0301e" stroke="#9a1a10" stroke-width=".3"/><circle cx="6" cy="5.4" r="2.7" fill="none" stroke="#1a2a8a" stroke-width="1.5" stroke-dasharray="1.3 .85"/><circle cx="6" cy="5.4" r="2" fill="none" stroke="#1a2a8a" stroke-width="1.1"/></svg><svg class="a" style="left:209.6px;top:423.6px;width:8px;height:8px" viewBox="0 0 8 8"><path d="M1.4 1.4L6.6 6.6M6.6 1.4L1.4 6.6" stroke="#5c5954" stroke-width="2.1"/></svg><svg class="a" style="left:337.5px;top:423.6px;width:8px;height:8px" viewBox="0 0 8 8"><path d="M1.4 1.4L6.6 6.6M6.6 1.4L1.4 6.6" stroke="#5c5954" stroke-width="2.1"/></svg>

<!-- ======= snap toolbar right ======= -->
<div class="a" style="left:786.3px;top:52.5px;width:1px;height:2px;background:#d8d5d0"></div>
<div class="a" style="left:788.8px;top:52.5px;width:1px;height:2px;background:#d8d5d0"></div>
<div class="a" style="left:791.3px;top:52.5px;width:1px;height:2px;background:#d8d5d0"></div>
<div class="btn" style="left:781.6px;top:57.0px;width:15.2px;height:12.9px;border-radius:2.5px"></div>
<svg class="a" style="left:783.4px;top:57.7px;width:11.6px;height:11.6px" viewBox="0 0 11 11"><path d="M3.5 5V3.7Q3.5 1.5 5.5 1.5Q7.5 1.5 7.5 3.7V5" fill="none" stroke="#0b7d5e" stroke-width="1.5"/><path d="M2 4.8H9V9.7H2Z" fill="#2fb08c" stroke="#0a6a50" stroke-width=".7"/><path d="M2.8 5.6H8.2" stroke="#8fe0c8" stroke-width=".7"/></svg>
<div class="btn" style="left:781.6px;top:73.0px;width:15.2px;height:12.9px;border-radius:2.5px"></div>
<svg class="a" style="left:783.4px;top:73.7px;width:11.6px;height:11.6px" viewBox="0 0 11 11"><path d="M1.5 9.5L9.5 1.5" stroke="#0b7d5e" stroke-width="1.9" stroke-linecap="round"/><circle cx="5.5" cy="5.5" r="2.6" fill="#12946f" stroke="#0a6a50" stroke-width=".6"/></svg>
<div class="btn" style="left:781.6px;top:89.0px;width:15.2px;height:12.9px;border-radius:2.5px"></div>
<svg class="a" style="left:783.4px;top:89.7px;width:11.6px;height:11.6px" viewBox="0 0 11 11"><path d="M5.5 1.6V8.2" stroke="#0e8a68" stroke-width="2.3"/><path d="M1.2 8.8H9.8" stroke="#0e8a68" stroke-width="2.2"/></svg>
<div class="btn" style="left:781.6px;top:105.0px;width:15.2px;height:12.9px;border-radius:2.5px"></div>
<svg class="a" style="left:783.4px;top:105.7px;width:11.6px;height:11.6px" viewBox="0 0 11 11"><path d="M3.7 1V10M7.3 1V10M1 3.7H10M1 7.3H10" stroke="#0e8a68" stroke-width="2.3" stroke-linecap="round"/></svg>
<div class="btn" style="left:781.6px;top:121.0px;width:15.2px;height:12.9px;border-radius:2.5px"></div>
<svg class="a" style="left:783.4px;top:121.7px;width:11.6px;height:11.6px" viewBox="0 0 11 11"><path d="M2 2L9 9M9 2L2 9" stroke="#0e8a68" stroke-width="2.6" stroke-linecap="round"/></svg>
<div class="btn" style="left:781.6px;top:137.0px;width:15.2px;height:12.9px;border-radius:2.5px"></div>
<svg class="a" style="left:783.4px;top:137.7px;width:11.6px;height:11.6px" viewBox="0 0 11 11"><path d="M1.8 3L9.2 6.2M1.8 6L9.2 9.2" stroke="#0e8a68" stroke-width="2" stroke-linecap="round"/></svg>
<div class="btn" style="left:781.6px;top:153.0px;width:15.2px;height:12.9px;border-radius:2.5px"></div>
<svg class="a" style="left:783.4px;top:153.7px;width:11.6px;height:11.6px" viewBox="0 0 11 11"><path d="M3 8L9.2 1.8" stroke="#0e8a68" stroke-width="1.8" stroke-linecap="round"/><circle cx="3" cy="8.2" r="2.2" fill="#0e8a68"/></svg>
<div class="btn" style="left:781.6px;top:169.0px;width:15.2px;height:12.9px;border-radius:2.5px"></div>
<svg class="a" style="left:783.4px;top:169.7px;width:11.6px;height:11.6px" viewBox="0 0 11 11"><circle cx="5.5" cy="5.5" r="2.5" fill="none" stroke="#0e8a68" stroke-width="1.8"/><path d="M5.5 .4L7.3 2.8H3.7ZM5.5 10.6L7.3 8.2H3.7ZM.4 5.5L2.8 3.7V7.3ZM10.6 5.5L8.2 3.7V7.3Z" fill="#0e8a68"/></svg>
<div class="btn" style="left:781.6px;top:185.0px;width:15.2px;height:12.9px;border-radius:2.5px;background:#d9d6d2;border-color:#bdb9b3"></div>
<svg class="a" style="left:783.4px;top:185.7px;width:11.6px;height:11.6px" viewBox="0 0 11 11"><circle cx="5.5" cy="5.5" r="3.8" fill="none" stroke="#0e8a68" stroke-width="1.5"/><circle cx="5.5" cy="5.5" r="1.8" fill="#0e8a68"/></svg>
<div class="btn" style="left:781.6px;top:201.0px;width:15.2px;height:12.9px;border-radius:2.5px"></div>
<svg class="a" style="left:783.4px;top:201.7px;width:11.6px;height:11.6px" viewBox="0 0 11 11"><circle cx="2.3" cy="5.5" r="1.45" fill="#0e8a68"/><circle cx="5.5" cy="5.5" r="1.45" fill="#0e8a68"/><circle cx="8.7" cy="5.5" r="1.45" fill="#0e8a68"/></svg>
<div class="btn" style="left:781.6px;top:217.0px;width:15.2px;height:12.9px;border-radius:2.5px"></div>
<svg class="a" style="left:783.4px;top:217.7px;width:11.6px;height:11.6px" viewBox="0 0 11 11"><path d="M1.8 4.4L8.6 9.2" stroke="#0e8a68" stroke-width="2.4" stroke-linecap="round"/><circle cx="8.2" cy="3" r="1.6" fill="#0e8a68"/></svg>
<div class="btn" style="left:781.6px;top:233.0px;width:15.2px;height:12.9px;border-radius:2.5px"></div>
<svg class="a" style="left:783.4px;top:233.7px;width:11.6px;height:11.6px" viewBox="0 0 11 11"><path d="M5.5 1.6V9.4M1.6 5.5H9.4" stroke="#0e8a68" stroke-width="2.5"/></svg>
<div class="btn" style="left:781.6px;top:249.0px;width:15.2px;height:12.9px;border-radius:2.5px"></div>
<svg class="a" style="left:783.4px;top:249.7px;width:11.6px;height:11.6px" viewBox="0 0 11 11"><path d="M4.4 2H9V5M6.8 2V4.6H2.8V9.4H5" fill="none" stroke="#1a8a6c" stroke-width="1.3"/><path d="M2.2 6.4H4.6M2.2 8H4" stroke="#6a9a8c" stroke-width=".7"/></svg>
<div class="btn" style="left:781.6px;top:265.0px;width:15.2px;height:12.9px;border-radius:2.5px"></div>
<svg class="a" style="left:783.4px;top:265.7px;width:11.6px;height:11.6px" viewBox="0 0 11 11"><path d="M1 1H10V10H1Z" fill="#12a078" stroke="#0a6a50" stroke-width=".8"/><circle cx="3.8" cy="7.2" r=".9" fill="none" stroke="#0a6a50" stroke-width=".45"/></svg>

<div class="t" style="left:1.40px;top:51.97px;font-size:9.20px;letter-spacing:-0.091px;color:#444444;line-height:normal;height:auto">Combo View</div>
<div class="t" style="left:5.30px;top:68.57px;font-size:9.20px;letter-spacing:0.217px;color:#444444;line-height:normal;height:auto">Model</div>
<div class="t" style="left:41.10px;top:68.57px;font-size:9.20px;letter-spacing:-0.521px;color:#444444;line-height:normal;height:auto">Tasks</div>
<div class="t" style="left:4.40px;top:86.97px;font-size:9.20px;letter-spacing:0.072px;color:#444444;line-height:normal;height:auto">Labels &amp; Attributes</div>
<div class="t" style="left:4.00px;top:99.97px;font-size:9.20px;letter-spacing:0.095px;color:#444444;line-height:normal;height:auto">Application</div>
<div class="t" style="left:29.80px;top:111.77px;font-size:9.20px;letter-spacing:-0.241px;color:#444444;line-height:normal;height:auto">Unnamed</div>
<div class="t" style="left:29.80px;top:123.47px;font-size:9.20px;letter-spacing:-0.122px;color:#2c2c2c;line-height:normal;height:auto;font-weight:bold">F2-T22-ejemplo-ini</div>
<div class="t" style="left:42.00px;top:134.97px;font-size:9.20px;letter-spacing:-0.271px;color:#444444;line-height:normal;height:auto">Prism</div>
<div class="t" style="left:42.00px;top:146.77px;font-size:9.20px;letter-spacing:-0.623px;color:#444444;line-height:normal;height:auto">Cube</div>
<div class="t" style="left:42.00px;top:158.57px;font-size:9.20px;letter-spacing:-0.252px;color:#2c2c2c;line-height:normal;height:auto;font-weight:bold">Cylinder</div>
<div class="t" style="left:5.60px;top:253.17px;font-size:9.20px;letter-spacing:0.181px;color:#444444;line-height:normal;height:auto">Property</div>
<div class="t" style="left:66.90px;top:253.17px;font-size:9.20px;letter-spacing:0.093px;color:#444444;line-height:normal;height:auto">Value</div>
<div class="t" style="left:7.00px;top:422.47px;font-size:9.20px;letter-spacing:-0.183px;color:#444444;line-height:normal;height:auto">View</div>
<div class="t" style="left:37.00px;top:422.47px;font-size:9.20px;letter-spacing:-0.307px;color:#444444;line-height:normal;height:auto">Data</div>
<div class="t" style="left:152.50px;top:422.67px;font-size:9.20px;letter-spacing:-0.221px;color:#444444;line-height:normal;height:auto">Unnamed : 1</div>
<div class="t" style="left:243.40px;top:422.67px;font-size:9.20px;letter-spacing:-0.180px;color:#444444;line-height:normal;height:auto">F2-T22-ejemplo-ini : 1</div>
<div class="t" style="left:296.00px;top:6.89px;font-size:9.40px;letter-spacing:-0.082px;color:#444444;line-height:normal;height:auto">Draft</div>
<div class="t" style="left:31.30px;top:31.29px;font-size:9.40px;letter-spacing:-0.612px;color:#444444;line-height:normal;height:auto">Top</div>
<div class="t" style="left:103.10px;top:31.49px;font-size:9.40px;letter-spacing:-0.162px;color:#444444;line-height:normal;height:auto">2px</div>
<div class="t" style="left:135.00px;top:31.49px;font-size:9.40px;letter-spacing:-0.450px;color:#444444;line-height:normal;height:auto">0,20</div>
<div class="t" style="left:722.00px;top:442.67px;font-size:9.20px;letter-spacing:-0.229px;color:#444444;line-height:normal;height:auto">139.08 x 79.38 mm</div>
<!-- ======= status bar ======= -->
<div class="a" style="left:0;top:438px;width:800px;height:1px;background:#e2dfdb"></div>

</body></html>
